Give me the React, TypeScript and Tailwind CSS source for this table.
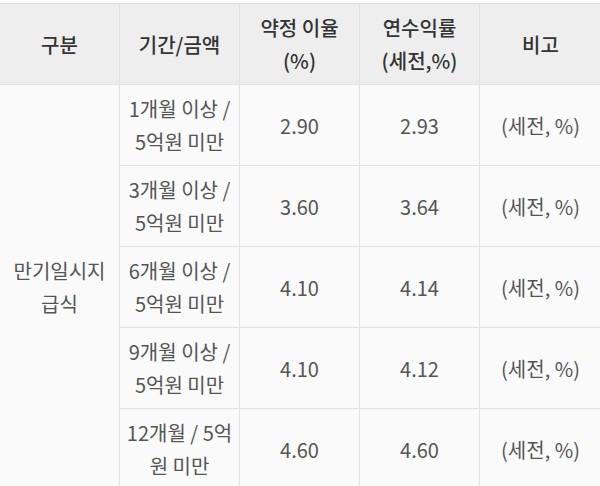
const rows = [
  { term: ["1개월 이상 /", "5억원 미만"], rate: "2.90", yieldRate: "2.93" },
  { term: ["3개월 이상 /", "5억원 미만"], rate: "3.60", yieldRate: "3.64" },
  { term: ["6개월 이상 /", "5억원 미만"], rate: "4.10", yieldRate: "4.14" },
  { term: ["9개월 이상 /", "5억원 미만"], rate: "4.10", yieldRate: "4.12" },
  { term: ["12개월 / 5억", "원 미만"], rate: "4.60", yieldRate: "4.60" },
];

const cell = "border border-[#e2e2e2] px-1 text-center align-middle";

export default function App() {
  return (
    <div
      className="h-[486px] w-[600px] overflow-hidden bg-white pt-[3px]"
      style={{ fontFamily: '"Noto Sans CJK KR", "Noto Sans", sans-serif' }}
    >
      <table className="w-[602px] -ml-px table-fixed border-collapse text-[20px] leading-[33px]">
        <colgroup>
          <col className="w-[120px]" />
          <col className="w-[120px]" />
          <col className="w-[120px]" />
          <col className="w-[120px]" />
          <col className="w-[122px]" />
        </colgroup>
        <thead>
          <tr className="h-[81px] bg-[#eeeeee] text-[#333333]">
            <th className={cell + " font-medium"}>구분</th>
            <th className={cell + " font-medium"}>기간/금액</th>
            <th className={cell + " font-medium"}>
              약정 이율
              <br />
              (%)
            </th>
            <th className={cell + " font-medium"}>
              연수익률
              <br />
              (세전,%)
            </th>
            <th className={cell + " font-medium"}>비고</th>
          </tr>
        </thead>
        <tbody className="bg-[#fafafa] text-[#555555]">
          {rows.map((r, i) => (
            <tr key={i} className="h-[81px]">
              {i === 0 && (
                <td rowSpan={5} className={cell}>
                  만기일시지
                  <br />
                  급식
                </td>
              )}
              <td className={cell}>
                {r.term[0]}
                <br />
                {r.term[1]}
              </td>
              <td className={cell}>{r.rate}</td>
              <td className={cell}>{r.yieldRate}</td>
              <td className={cell}>(세전, %)</td>
            </tr>
          ))}
        </tbody>
      </table>
    </div>
  );
}
